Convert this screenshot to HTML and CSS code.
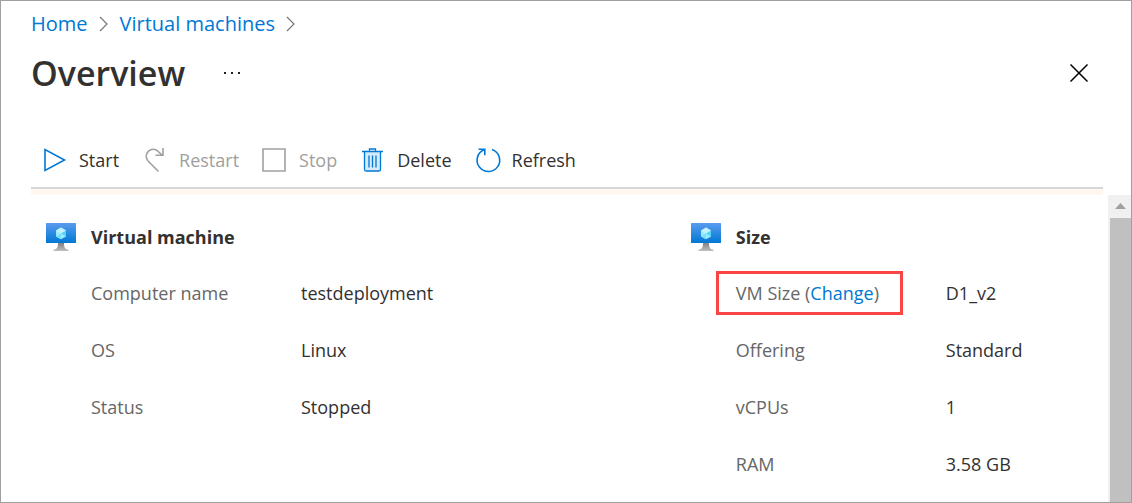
FILE: index.html
```html
<!DOCTYPE html>
<html lang="en">
<head>
<meta charset="utf-8">
<title>Overview</title>
<link rel="stylesheet" href="styles.css">
</head>
<body>
<svg class="defs" aria-hidden="true">
  <defs>
    <linearGradient id="screen" x1="0" y1="1" x2="0" y2="0"><stop offset="0" stop-color="#0078d4"/><stop offset="1" stop-color="#5a9bee"/></linearGradient>
    <linearGradient id="stand" x1="0" y1="0" x2="0" y2="1"><stop offset="0" stop-color="#808080"/><stop offset="1" stop-color="#c0c0c0"/></linearGradient>
    <symbol id="vm" viewBox="0 0 30 30">
      <path fill="url(#stand)" d="M12 20h6c0 4 .8 6.200 4.500 6.700V28h-15v-1.300C11.200 26.200 12 24 12 20z"/>
      <rect width="30" height="20" rx=".5" fill="url(#screen)"/>
      <path fill="#9cebff" d="M15 4.500 20 7.400v6L15 16.300l-5-2.900v-6z"/>
      <path fill="#c3f1ff" d="M15 4.500 20 7.400 15 10.400 10 7.400z"/>
      <path fill="#50d5f5" d="M20 7.400v6L15 10.400z"/>
      <path fill="#76e0fa" d="M10 13.400 15 10.400v5.900z"/>
    </symbol>
  </defs>
</svg>
<div class="blade">
  <header class="head">
    <nav class="crumbs" aria-label="Breadcrumb">
      <a href="#">Home</a>
      <svg class="chevron" viewBox="0 0 10 16"><path d="M1 1l7 7-7 7"/></svg>
      <a href="#">Virtual machines</a>
      <svg class="chevron" viewBox="0 0 10 16"><path d="M1 1l7 7-7 7"/></svg>
    </nav>
    <div class="title-row">
      <h1>Overview</h1>
      <button class="more" aria-label="More"><svg width="18" height="4" viewBox="0 0 18 4"><path d="M1 1h2v2H1zM8 1h2v2H8zM15 1h2v2h-2z"/></svg></button>
      <button class="close" aria-label="Close"><svg width="18" height="18" viewBox="0 0 18 18"><path d="M.5.5l17 17M17.500.5l-17 17"/></svg></button>
    </div>
    <div class="toolbar">
      <button><svg class="icon" viewBox="0 0 24 24"><path d="M2 1.500v21L21.500 12z"/></svg>Start</button>
      <button disabled><svg class="icon" viewBox="0 0 24 24"><path d="M15.500 23.500 5.500 13.500C2.500 10.500 2.500 6 5.500 3.200 8.500.400 12.500.800 15 3.300L19 7M20 0v7.300h-7.500"/></svg>Restart</button>
      <button disabled><svg class="icon" viewBox="0 0 24 24"><path d="M0 1h22v22H0z"/></svg>Stop</button>
      <button><svg class="icon thin" viewBox="0 0 24 24"><path fill="#d5eafa" stroke="none" d="M4 4h16v19H4z"/><path d="M1 3.500h21M8.500 3.500V1h6v2.500M3.500 3.500v18q0 1.500 1.500 1.500h13q1.500 0 1.500-1.500v-18M8 7.500v12M11.500 7.500v12M15 7.500v12"/></svg>Delete</button>
      <button><svg class="icon" viewBox="0 0 24 24"><path d="M16 1.500A11.300 11.300 0 1 1 8 1.800M2.500 1.200h6.300v6"/></svg>Refresh</button>
    </div>
  </header>
  <div class="body">
    <main class="panels">
      <section>
        <h2><svg class="vm"><use href="#vm"/></svg>Virtual machine</h2>
        <dl>
          <dt>Computer name</dt><dd>testdeployment</dd>
          <dt>OS</dt><dd>Linux</dd>
          <dt>Status</dt><dd>Stopped</dd>
        </dl>
      </section>
      <section>
        <h2><svg class="vm"><use href="#vm"/></svg>Size</h2>
        <dl>
          <dt><span class="callout">VM Size (<a href="#">Change</a>)</span></dt><dd>D1_v2</dd>
          <dt>Offering</dt><dd>Standard</dd>
          <dt>vCPUs</dt><dd>1</dd>
          <dt>RAM</dt><dd>3.58 GB</dd>
        </dl>
      </section>
    </main>
    <div class="scrollbar">
      <svg width="11" height="6" viewBox="0 0 11 6"><path d="M0 6 5.500 0 11 6z"/></svg>
      <div class="thumb"></div>
    </div>
  </div>
</div>
</body>
</html>
```
FILE: styles.css
```css
* { box-sizing: border-box; }
body { margin: 0; background: #fff; color: #323130; font: 18px/26px "Segoe UI", "Open Sans", sans-serif; }
.defs { position: absolute; width: 0; height: 0; }
a { color: #0078d4; text-decoration: none; }
button { display: flex; align-items: center; padding: 0; border: 0; background: none; color: inherit; font: inherit; }
.blade { display: flex; flex-direction: column; min-height: 100vh; border: 1px solid #a0a0a0; }

.head { padding: 10px 28px 0 30px; }
.crumbs { display: flex; align-items: center; gap: 11px; font-size: 20px; }
.chevron { width: 10px; height: 16px; fill: none; stroke: #777; stroke-width: 1.2; }
.title-row { display: flex; align-items: center; height: 48px; margin-top: 12px; }
h1 { margin: 0; font-size: 34px; line-height: 48px; font-weight: 600; }
.more { margin-left: 38px; fill: #222; }
.close { margin-left: auto; margin-right: 15px; stroke: #000; stroke-width: 1.5; }
.toolbar { display: flex; gap: 24px; padding: 48px 0 12px 12px; border-bottom: 2px solid #d6d6d6; }
.toolbar button { gap: 12px; height: 30px; }
.toolbar button:disabled { color: #a19f9d; }
.icon { width: 24px; height: 24px; fill: none; stroke: #0078d4; stroke-width: 1.6; overflow: visible; }
.icon.thin { stroke-width: 1.3; }
button:disabled .icon { stroke: #a0a0a0; }
.head::after { content: ""; display: block; height: 6px; background: #fff7f0; }

.body { display: flex; flex: 1; }
.panels { display: grid; grid-template-columns: 17fr 11fr; flex: 1; padding: 28px 0 9px 45px; }
h2 { display: flex; align-items: flex-start; gap: 15px; margin: 0 0 18px; font-size: 18px; line-height: 28px; font-weight: 700; }
.vm { width: 30px; height: 30px; }
dl { display: grid; grid-template-columns: 210px 1fr; row-gap: 13px; margin: 0 0 0 45px; line-height: 44px; }
dt { color: #666; white-space: nowrap; }
dd { margin: 0; }
.callout { display: inline-block; margin: 0 -20px; padding: 0 21px 0 17px; border: 3px solid #f94545; line-height: 38px; vertical-align: top; }

.scrollbar { display: flex; flex-direction: column; align-items: center; width: 23px; padding: 8px 0 0 2px; background: #f0f0f0; fill: #a0a0a0; }
.scrollbar svg { margin-bottom: 9px; }
.thumb { flex: 1; align-self: stretch; background: #c0c0c0; }
```
